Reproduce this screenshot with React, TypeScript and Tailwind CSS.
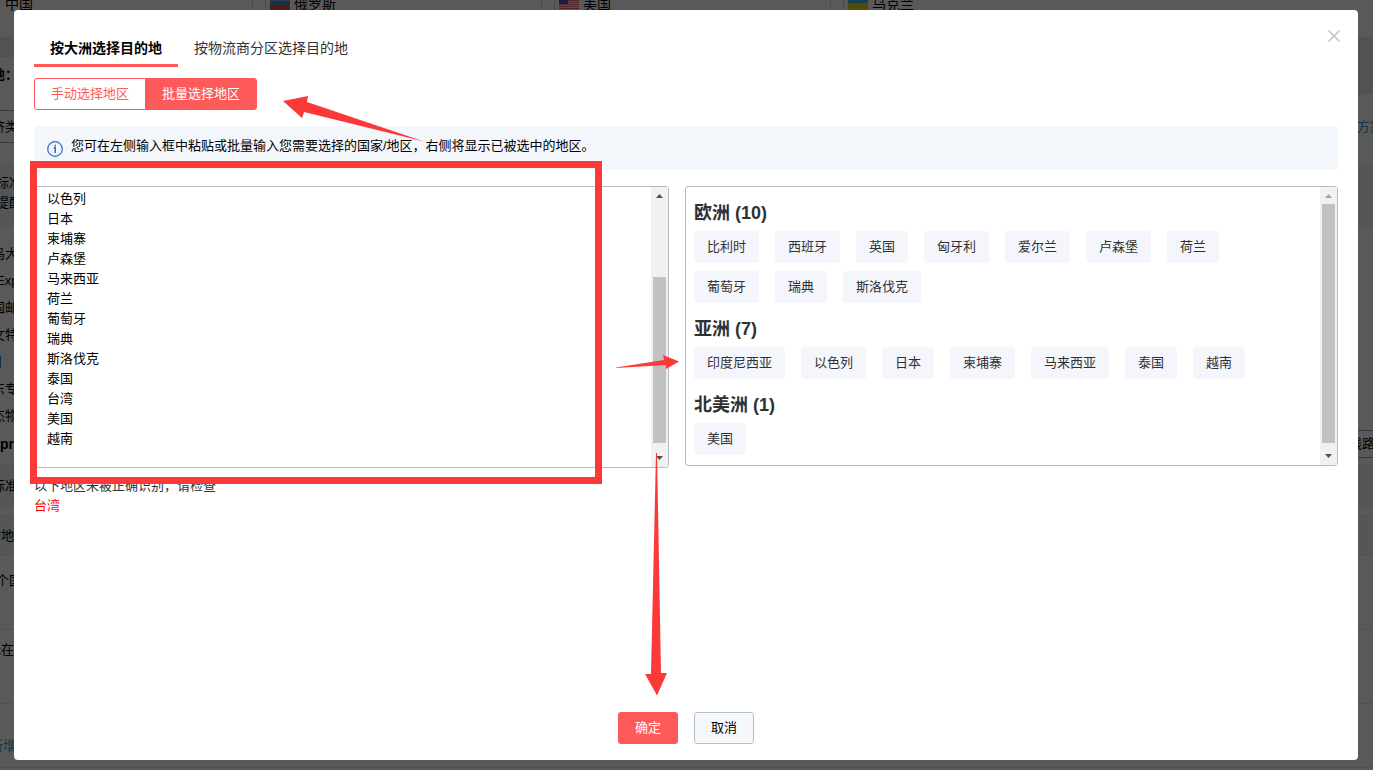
import { X } from 'lucide-react'
import clsx from 'clsx'

interface Region {
  name: string
  countries: string[]
}

const REGIONS: Region[] = [
  {
    name: '欧洲',
    countries: ['比利时', '西班牙', '英国', '匈牙利', '爱尔兰', '卢森堡', '荷兰', '葡萄牙', '瑞典', '斯洛伐克'],
  },
  {
    name: '亚洲',
    countries: ['印度尼西亚', '以色列', '日本', '柬埔寨', '马来西亚', '泰国', '越南'],
  },
  { name: '北美洲', countries: ['美国'] },
]

const INPUT_LINES = [
  '以色列',
  '日本',
  '柬埔寨',
  '卢森堡',
  '马来西亚',
  '荷兰',
  '葡萄牙',
  '瑞典',
  '斯洛伐克',
  '泰国',
  '台湾',
  '美国',
  '越南',
]

function RussiaFlag() {
  return (
    <svg viewBox="0 0 20 14" className="h-3.5 w-5">
      <path fill="#8fb4e8" d="M0 0h20v5H0z" />
      <path fill="#4a86d0" d="M0 5h20v4H0z" />
      <path fill="#d0573a" d="M0 9h20v5H0z" />
    </svg>
  )
}

function UsaFlag() {
  return (
    <svg viewBox="0 0 20 14" className="h-3.5 w-5">
      <path fill="#f5e5e5" d="M0 0h20v14H0z" />
      <path stroke="#e0707a" d="M0 .5h20M0 2.500h20M0 4.500h20M0 6.500h20M0 8.500h20M0 10.500h20M0 12.500h20" />
      <path fill="#4a5ab0" d="M0 0h9v8H0z" />
    </svg>
  )
}

function UkraineFlag() {
  return (
    <svg viewBox="0 0 20 14" className="h-3.5 w-5">
      <path fill="#3fb4ea" d="M0 0h20v7H0z" />
      <path fill="#e8dc1c" d="M0 7h20v7H0z" />
    </svg>
  )
}

/** The quote page that stays visible around the edges of the dialog. */
function BackgroundPage() {
  return (
    <div aria-hidden="true" className="text-[13px] leading-5 whitespace-nowrap text-black">
      <div className="flex h-[37px] gap-3 text-sm">
        <div className="-mt-1.5 h-8 w-[253px] border-r border-gray-300 pl-[5px]">中国</div>
        <div className="-mt-1.5 flex h-8 w-[277px] gap-1 border-x border-gray-300 pl-1 [&>svg]:mt-0.5">
          <RussiaFlag />
          俄罗斯
        </div>
        <div className="-mt-1.5 flex h-8 w-[277px] gap-1 border-x border-gray-300 pl-1 [&>svg]:mt-0.5">
          <UsaFlag />
          美国
        </div>
        <div className="-mt-1.5 flex h-8 w-[277px] gap-1 border-l border-gray-300 pl-1 [&>svg]:mt-0.5">
          <UkraineFlag />
          乌克兰
        </div>
      </div>
      <div className="h-5 bg-[#ebebeb]" />
      <div className="flex h-[53px] justify-between">
        <div className="-ml-2 pt-2 font-bold">地：</div>
        <div className="h-[37px] w-4 bg-[#ebebeb]" />
      </div>
      <div className="flex h-[33px] items-center justify-between">
        <div className="-ml-2 flex h-full w-8 items-center border-y border-gray-400">济类</div>
        <div className="-mr-4 w-8 text-[#2aa3d0]">方案</div>
      </div>
      <div className="mt-5 h-16 bg-[#f0f3f8] pt-2.5">
        <div className="-ml-1">标准</div>
        <div className="-ml-1">提醒</div>
      </div>
      <div className="-ml-2 flex h-[203px] flex-col gap-[7px] pt-[17px]">
        <div>乌大</div>
        <div className="pl-1">Exp</div>
        <div>国邮</div>
        <div>文特</div>
        <div className="h-3 w-[9px] self-start border-r-2 border-[#2a8fe0] mt-1 mb-1" />
        <div>东专</div>
        <div>杰物</div>
      </div>
      <div className="flex h-[34px] items-start justify-between">
        <div className="pt-1 text-sm font-bold">pr</div>
        <div className="-mr-1 flex h-7 w-7 items-center border-y border-gray-400">线路</div>
      </div>
      <div className="h-[43px] bg-[#f0f3f8] pt-3">
        <div className="-ml-2">标准</div>
      </div>
      <div className="mt-2 h-10 border-y border-gray-200 bg-[#f2f6f6] pt-2.5">
        <div className="-ml-3">的地</div>
      </div>
      <div className="h-[75px] border-b border-gray-200 pt-4">
        <div className="-ml-1">个国</div>
      </div>
      <div className="h-[74px] border-b border-gray-200 pt-2.5">
        <div className="-ml-3">择在</div>
      </div>
      <div className="h-16 border-b border-gray-200 pt-8 text-[#2aa3d0]">
        <div className="-ml-2.5">新增</div>
      </div>
    </div>
  )
}

function InfoIcon() {
  return (
    <svg viewBox="0 0 16 16" fill="none" className="mt-[5px] size-4 shrink-0" stroke="#3a6fc8">
      <circle cx="8" cy="8" r="7.300" strokeWidth="1.300" />
      <path strokeWidth="1.600" d="M6.800 6.800H8.200V12M8.200 3.800v1.700" />
    </svg>
  )
}

function ScrollArrow({ up, muted }: { up?: boolean; muted?: boolean }) {
  return (
    <svg viewBox="0 0 17 17" className={clsx('size-[17px] shrink-0', up && 'rotate-180')}>
      <path d="M5 6h7l-3.500 4z" fill={muted ? '#a3a3a3' : '#505050'} />
    </svg>
  )
}

function Scrollbar({ thumb, atTop }: { thumb: string; atTop?: boolean }) {
  return (
    <div aria-hidden="true" className="flex w-[17px] shrink-0 flex-col bg-[#f1f1f1]">
      <ScrollArrow up muted={atTop} />
      <div className="flex flex-1 flex-col">
        <div className={clsx('mx-0.5 bg-[#c1c1c1]', thumb)} />
      </div>
      <ScrollArrow />
    </div>
  )
}

function RegionGroup({ region }: { region: Region }) {
  return (
    <section>
      <h3 className="text-lg leading-9 font-bold text-[#303133]">
        {region.name} ({region.countries.length})
      </h3>
      <ul className="flex flex-wrap">
        {region.countries.map((c) => (
          <li key={c} className="mr-4 mb-2 h-8 rounded-[3px] bg-[#f4f6fb] px-[13px] leading-[31px] text-[#303133]">
            {c}
          </li>
        ))}
      </ul>
    </section>
  )
}

/** Red frame and arrows drawn on top of the dialog. */
function Annotations() {
  return (
    <svg
      aria-hidden="true"
      width="700"
      height="720"
      fill="#fb3939"
      className="pointer-events-none absolute top-0 left-0"
    >
      <rect x="19.500" y="154.500" width="565" height="316" fill="none" stroke="#fb3939" strokeWidth="7" />
      <path d="M269 91l25-5-1 6 117 39.500-120-29.500-2 6z" />
      <path d="M602 357.500l48-7.500-1-5 16 6.500-13 7.500v-4l-50 3z" />
      <path d="M642 443h1l4 220h6l-10 22.500-12-21.500h6z" />
    </svg>
  )
}

export default function App() {
  return (
    <div className="relative min-h-screen overflow-hidden bg-white font-['Liberation_Sans','Noto_Sans_CJK_SC',sans-serif]">
      <div className="h-screen overflow-hidden">
        <BackgroundPage />
      </div>
      <div className="fixed inset-0 bg-black/65" />

      <div
        role="dialog"
        aria-modal="true"
        aria-label="选择目的地"
        className="fixed top-2.5 right-[15px] bottom-2.5 left-[14px] flex flex-col rounded bg-white px-5 pt-5 pb-4 text-[13px] leading-5 text-black"
      >
        <button type="button" aria-label="关闭" className="absolute top-4 right-3.5 text-[#c0c4cc]">
          <X className="size-5" strokeWidth={2} />
        </button>

        <div role="tablist" className="flex text-sm">
          <button
            type="button"
            role="tab"
            aria-selected="true"
            className="h-[37px] border-b-3 border-[#ff5a5a] px-4 pt-0.5 font-bold"
          >
            按大洲选择目的地
          </button>
          <button
            type="button"
            role="tab"
            aria-selected="false"
            className="h-[37px] border-b-3 border-transparent px-4 pt-0.5 text-[#303133]"
          >
            按物流商分区选择目的地
          </button>
        </div>

        <div className="mt-[11px] flex">
          <button type="button" className="h-8 rounded-l-[3px] border border-[#ff5a5a] px-4 text-[#ff5a5a]">
            手动选择地区
          </button>
          <button
            type="button"
            className="-ml-px h-8 rounded-r-[3px] border border-[#ff5a5a] bg-[#ff5a5a] px-4 text-white"
          >
            批量选择地区
          </button>
        </div>

        <div className="mt-4 flex h-11 gap-2 rounded bg-[#f3f6fb] px-[13px] pt-2.5">
          <InfoIcon />
          <p>您可在左侧输入框中粘贴或批量输入您需要选择的国家/地区，右侧将显示已被选中的地区。</p>
        </div>

        <div className="mt-4 flex items-start gap-4">
          <div className="flex-1">
            <div className="flex h-[282px] rounded-[3px] border border-[#b4bac6]">
              <textarea
                aria-label="国家/地区"
                defaultValue={INPUT_LINES.join('\n')}
                className="flex-1 resize-none overflow-hidden px-3 pt-0.5 outline-none"
              />
              <Scrollbar thumb="mt-[73px] h-[166px]" />
            </div>
            <p className="mt-2 text-[#303133]">以下地区未被正确识别，请检查</p>
            <p className="text-[#ff0000]">台湾</p>
          </div>

          <div className="flex h-[280px] w-[calc(50%+1px)] rounded-[3px] border border-[#b4bac6]">
            <div className="flex-1 p-2">
              {REGIONS.map((r) => (
                <RegionGroup key={r.name} region={r} />
              ))}
            </div>
            <Scrollbar atTop thumb="h-[239px]" />
          </div>
        </div>

        <div className="mt-auto flex justify-center gap-4">
          <button type="button" className="h-8 w-[60px] rounded-[3px] bg-[#ff5a5a] text-white">
            确定
          </button>
          <button type="button" className="h-8 w-[60px] rounded-[3px] border border-[#b4bccc] bg-[#f5f8fa]">
            取消
          </button>
        </div>

        <Annotations />
      </div>
    </div>
  )
}
